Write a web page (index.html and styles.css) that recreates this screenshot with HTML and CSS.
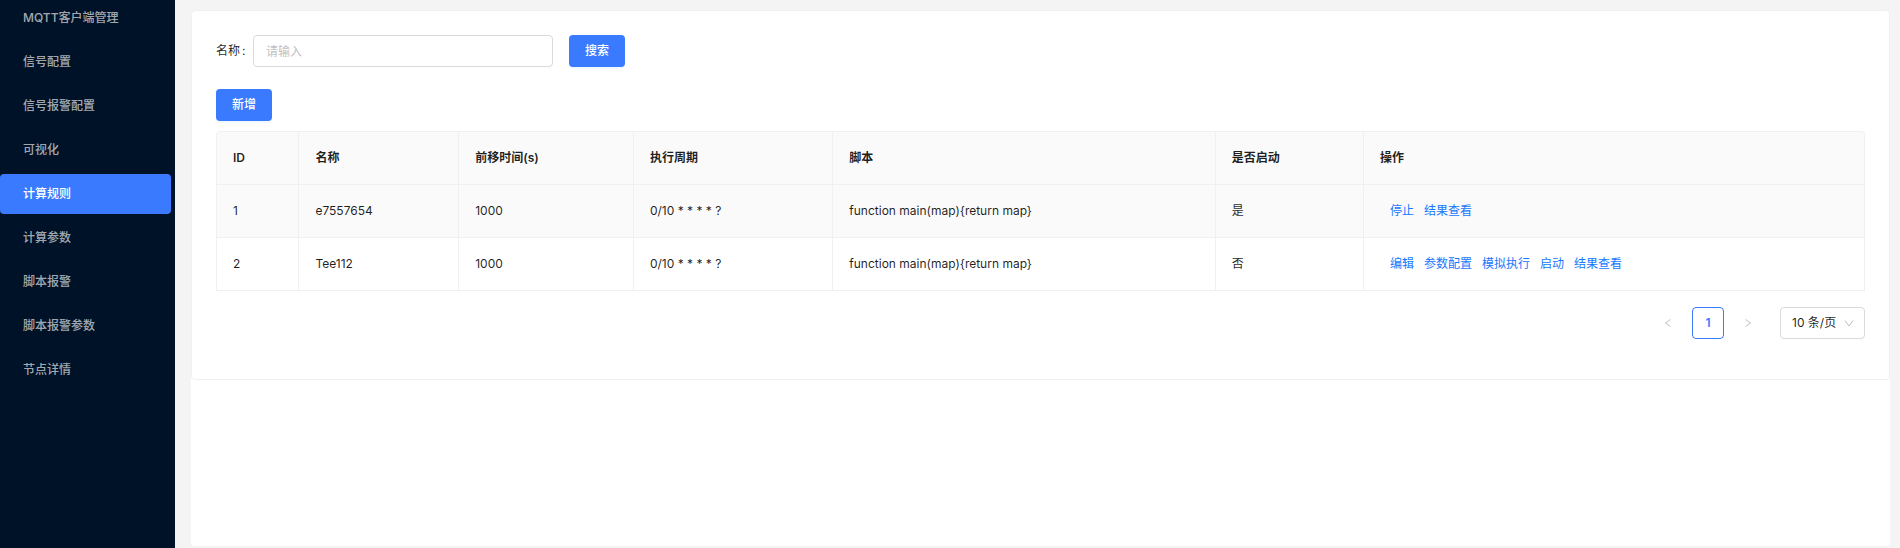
FILE: index.html
```html
<!DOCTYPE html>
<html lang="zh-CN">
<head>
<meta charset="utf-8">
<title>计算规则</title>
<link rel="stylesheet" href="styles.css">
</head>
<body>
<div class="layout">
  <nav class="sidebar">
    <ul class="menu">
      <li><a class="menu-item" href="#">MQTT客户端管理</a></li>
      <li><a class="menu-item" href="#">信号配置</a></li>
      <li><a class="menu-item" href="#">信号报警配置</a></li>
      <li><a class="menu-item" href="#">可视化</a></li>
      <li><a class="menu-item active" href="#" aria-current="page">计算规则</a></li>
      <li><a class="menu-item" href="#">计算参数</a></li>
      <li><a class="menu-item" href="#">脚本报警</a></li>
      <li><a class="menu-item" href="#">脚本报警参数</a></li>
      <li><a class="menu-item" href="#">节点详情</a></li>
    </ul>
  </nav>
  <main class="content">
    <div class="page">
      <section class="card">
        <form class="search">
          <label class="search-label" for="name">名称<span class="colon">:</span></label>
          <input class="input" id="name" type="text" placeholder="请输入">
          <button class="btn" type="button">搜索</button>
        </form>
        <div class="toolbar"><button class="btn" type="button">新增</button></div>
        <table class="table">
          <colgroup>
            <col class="col-id"><col class="col-name"><col class="col-shift"><col class="col-cron"><col class="col-script"><col class="col-enabled"><col>
          </colgroup>
          <thead>
            <tr><th>ID</th><th>名称</th><th>前移时间(s)</th><th>执行周期</th><th>脚本</th><th>是否启动</th><th>操作</th></tr>
          </thead>
          <tbody>
            <tr class="hovered">
              <td>1</td><td>e7557654</td><td>1000</td><td>0/10 * * * * ?</td><td>function main(map){return map}</td><td>是</td>
              <td><div class="actions"><a href="#">停止</a><a href="#">结果查看</a></div></td>
            </tr>
            <tr>
              <td>2</td><td>Tee112</td><td>1000</td><td>0/10 * * * * ?</td><td>function main(map){return map}</td><td>否</td>
              <td><div class="actions"><a href="#">编辑</a><a href="#">参数配置</a><a href="#">模拟执行</a><a href="#">启动</a><a href="#">结果查看</a></div></td>
            </tr>
          </tbody>
        </table>
        <div class="pagination">
          <button class="pager" type="button" disabled aria-label="上一页"><svg class="icon" viewBox="0 0 12 12"><path d="M8.5 2.5 3.5 6l5 3.5"/></svg></button>
          <button class="pager current" type="button">1</button>
          <button class="pager" type="button" disabled aria-label="下一页"><svg class="icon" viewBox="0 0 12 12"><path d="M3.5 2.5 8.5 6l-5 3.5"/></svg></button>
          <div class="page-size">
            <select class="select" aria-label="每页条数"><option>10 条/页</option></select>
            <svg class="icon select-arrow" viewBox="0 0 12 12"><path d="M2 3.5 6 9l4-5.5"/></svg>
          </div>
        </div>
      </section>
    </div>
  </main>
</div>
</body>
</html>
```
FILE: styles.css
```css
* {
  box-sizing: border-box;
}

body {
  margin: 0;
  background: #f4f4f4;
  color: rgba(0, 0, 0, 0.88);
  font: 12px/20px Inter, "Noto Sans CJK SC", sans-serif;
}

a {
  text-decoration: none;
}

button,
input,
select {
  font: inherit;
}

.layout {
  display: flex;
  height: 100vh;
  overflow: hidden;
}

.sidebar {
  flex: 0 0 175px;
  overflow: hidden;
  background: #001227;
}

.menu {
  display: flex;
  flex-direction: column;
  gap: 4px;
  margin: -2px 4px 0 0;
  padding: 0;
  list-style: none;
}

.menu-item {
  display: block;
  padding: 0 23px;
  border-radius: 4px;
  color: rgba(255, 255, 255, 0.65);
  font-weight: 500;
  line-height: 40px;
}

.menu-item.active {
  background: #3a7afe;
  color: #fff;
}

.content {
  display: flex;
  flex: 1;
  min-width: 0;
  padding: 10px 10px 2px 16px;
}

.page {
  flex: 1;
  min-width: 0;
  border-radius: 4px;
  background: #fff;
}

.card {
  padding: 24px;
  border: 1px solid #f0f0f0;
  border-radius: 4px;
}

.search {
  display: flex;
  align-items: center;
}

.search-label {
  display: flex;
  width: 37px;
}

.colon {
  margin-left: 2px;
}

.input {
  width: 300px;
  height: 32px;
  margin-right: 16px;
  padding: 0 12px;
  border: 1px solid #d9d9d9;
  border-radius: 4px;
  background: #fff;
  color: inherit;
}

.input::placeholder {
  color: #bfbfbf;
}

.btn {
  height: 32px;
  padding: 0 16px;
  border: 0;
  border-radius: 4px;
  background: #3a7afe;
  box-shadow: 0 2px 0 rgba(5, 145, 255, 0.06);
  color: #fff;
  font-weight: 500;
}

.toolbar {
  margin: 22px 0 10px;
}

.table {
  width: 100%;
  border: 1px solid #f0f0f0;
  border-right: 0;
  border-bottom: 0;
  border-radius: 4px 4px 0 0;
  border-spacing: 0;
  table-layout: fixed;
}

.col-id { width: 5%; }
.col-name { width: 9.7%; }
.col-shift { width: 10.6%; }
.col-cron { width: 12.1%; }
.col-script { width: 23.2%; }
.col-enabled { width: 9%; }

.table th,
.table td {
  padding: 16px;
  border-right: 1px solid #f0f0f0;
  border-bottom: 1px solid #f0f0f0;
  text-align: left;
}

.table th {
  background: #fafafa;
  font-weight: 600;
}

.table th:last-child {
  border-top-right-radius: 4px;
}

.hovered {
  background: #fafafa;
}

.actions {
  display: flex;
  gap: 10px;
  padding-left: 10px;
}

.actions a {
  color: #1677ff;
}

.pagination {
  display: flex;
  justify-content: flex-end;
  gap: 8px;
  margin: 16px 0;
}

.pager {
  display: flex;
  align-items: center;
  justify-content: center;
  width: 32px;
  height: 32px;
  padding: 0;
  border: 1px solid transparent;
  border-radius: 4px;
  background: transparent;
  color: #bfbfbf;
}

.pager.current {
  border-color: #3a7afe;
  background: #fff;
  color: #3a7afe;
  font-weight: 600;
}

.icon {
  width: 12px;
  height: 12px;
  fill: none;
  stroke: currentColor;
  stroke-width: 1;
}

.page-size {
  position: relative;
  margin-left: 8px;
  color: #bfbfbf;
}

.select {
  width: 85px;
  height: 32px;
  padding: 0 11px;
  appearance: none;
  border: 1px solid #d9d9d9;
  border-radius: 4px;
  background: #fff;
  color: rgba(0, 0, 0, 0.88);
}

.select-arrow {
  position: absolute;
  top: 10px;
  right: 10px;
  pointer-events: none;
}
```
